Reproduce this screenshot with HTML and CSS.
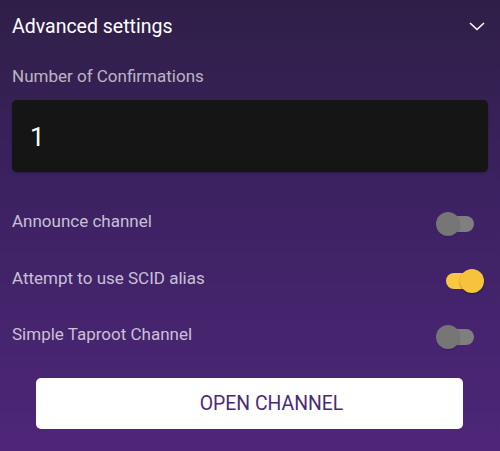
FILE: index.html
```html
<!DOCTYPE html>
<html>
<head>
<meta charset="utf-8">
<link rel="stylesheet" href="styles.css">
</head>
<body>
<div class="page">
  <div class="header">
    <span class="title">Advanced settings</span>
    <svg class="chevron" width="16" height="9" viewBox="0 0 16 9"><polyline points="1,1 8,7.5 15,1" fill="none" stroke="#ffffff" stroke-width="1.6"/></svg>
  </div>
  <div class="field-label">Number of Confirmations</div>
  <div class="input"><span class="input-value">1</span></div>
  <div class="rows">
    <div class="row">
      <span class="row-label">Announce channel</span>
      <span class="toggle off"><span class="track"></span><span class="thumb"></span></span>
    </div>
    <div class="row">
      <span class="row-label">Attempt to use SCID alias</span>
      <span class="toggle on"><span class="track"></span><span class="thumb"></span></span>
    </div>
    <div class="row">
      <span class="row-label">Simple Taproot Channel</span>
      <span class="toggle off"><span class="track"></span><span class="thumb"></span></span>
    </div>
  </div>
  <div class="button">OPEN CHANNEL</div>
</div>
</body>
</html>
```
FILE: styles.css
```css
html, body {
  margin: 0;
  padding: 0;
  height: 451px;
  overflow: hidden;
}
body {
  background: linear-gradient(180deg, #2f1f47 0%, #3d2263 45%, #4e2679 100%);
  font-family: Roboto, "Noto Sans", sans-serif;
  color: #ffffff;
}
.page {
  display: flex;
  flex-direction: column;
  padding: 0 12px;
}
.header {
  height: 52px;
  display: flex;
  align-items: center;
  justify-content: space-between;
}
.title {
  font-size: 19.5px;
  color: #ffffff;
}
.chevron {
  margin-right: 3px;
  margin-top: 1px;
}
.field-label {
  margin-top: 14px;
  line-height: 20px;
  font-size: 17px;
  color: rgba(255, 255, 255, 0.68);
}
.input {
  margin-top: 14px;
  height: 72px;
  background: #151515;
  border-radius: 5px;
  display: flex;
  align-items: center;
  padding-left: 18px;
  box-shadow: 0 1px 2px rgba(0,0,0,0.3);
}
.input-value {
  font-size: 26px;
  color: #ffffff;
  margin-top: 2px;
}
.rows {
  margin-top: 22.5px;
  display: flex;
  flex-direction: column;
}
.row {
  height: 56.5px;
  display: flex;
  align-items: center;
  justify-content: space-between;
}
.row-label {
  font-size: 17px;
  color: rgba(255, 255, 255, 0.72);
  margin-bottom: 3px;
}
.toggle {
  position: relative;
  width: 48px;
  height: 24px;
  margin-right: 4px;
  margin-top: 3px;
}
.track {
  position: absolute;
  top: 4px;
  height: 16px;
  border-radius: 8px;
}
.thumb {
  position: absolute;
  top: 0;
  width: 24px;
  height: 24px;
  border-radius: 50%;
}
.toggle.off .track {
  left: 4px;
  width: 34px;
  background: #7f7f7f;
}
.toggle.off .thumb {
  left: 0;
  background: #767676;
  box-shadow: 0 1px 1px rgba(0,0,0,0.2);
}
.toggle.on .track {
  left: 10px;
  width: 32px;
  background: #f9c843;
}
.toggle.on .thumb {
  right: 0;
  background: #f6c33b;
  box-shadow: 0 1px 2px rgba(0,0,0,0.35);
}
.button {
  margin: 14px 25px 0 24px;
  height: 51px;
  background: #ffffff;
  border-radius: 5px;
  display: flex;
  align-items: center;
  justify-content: center;
  padding-left: 44px;
  font-size: 19.4px;
  color: #4a2a78;
}
```
